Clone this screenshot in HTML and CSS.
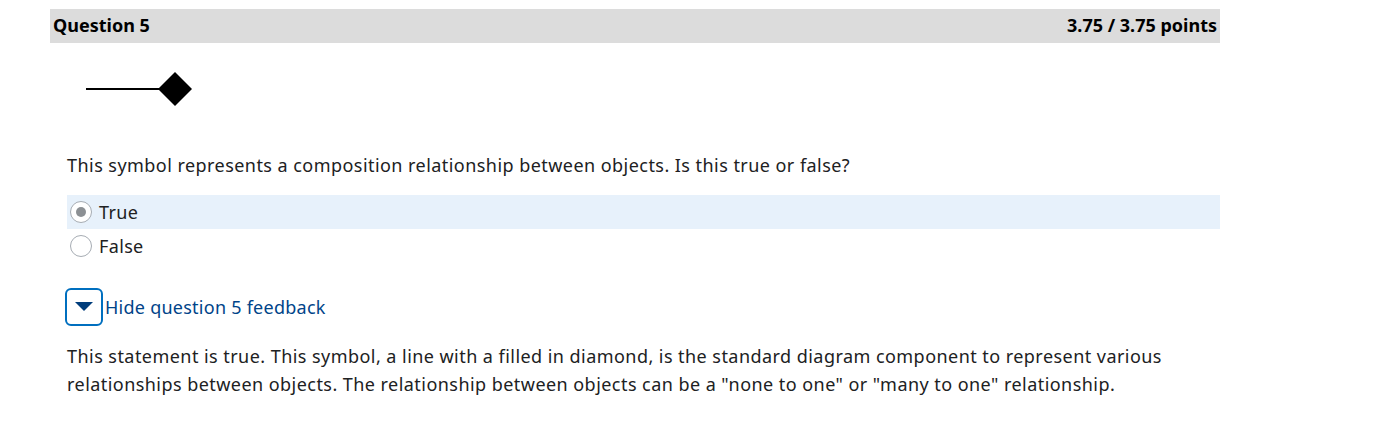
FILE: index.html
```html
<!DOCTYPE html>
<html>
<head>
<meta charset="utf-8">
<link rel="stylesheet" href="styles.css">
</head>
<body>
<div class="question">
  <div class="qhead">
    <span class="qtitle">Question 5</span>
    <span class="qpoints">3.75 / 3.75 points</span>
  </div>
  <div class="qbody">
    <div class="figure">
      <svg width="110" height="40" viewBox="0 0 110 40">
        <line x1="0" y1="20" x2="75" y2="20" stroke="#000" stroke-width="2"/>
        <polygon points="72,20 89,3 106,20 89,37" fill="#000"/>
      </svg>
    </div>
    <p class="prompt">This symbol represents a composition relationship between objects. Is this true or false?</p>
    <div class="options">
      <div class="option selected"><span class="radio checked"></span><span>True</span></div>
      <div class="option"><span class="radio"></span><span>False</span></div>
    </div>
    <div class="fb-toggle">
      <span class="fb-btn"><svg width="18" height="10" viewBox="0 0 18 10"><polygon points="0,0 18,0 9,9" fill="#003d7c"/></svg></span>
      <a class="fb-link">Hide question 5 feedback</a>
    </div>
    <p class="feedback">This statement is true. This symbol, a line with a filled in diamond, is the standard diagram component to represent various relationships between objects. The relationship between objects can be a "none to one" or "many to one" relationship.</p>
  </div>
</div>
</body>
</html>
```
FILE: styles.css
```css
html, body {
  margin: 0;
  padding: 0;
  background: #fff;
}
body {
  font-family: "Noto Sans", "Open Sans", sans-serif;
  color: #202122;
  padding: 9px 0 0 50px;
}
.question {
  width: 1170px;
}
.qhead {
  display: flex;
  justify-content: space-between;
  align-items: center;
  background: #dcdcdc;
  height: 34px;
  padding: 0 3px;
  font-weight: bold;
  font-size: 18px;
  line-height: 30px;
  color: #000;
  padding-bottom: 2px;
  box-sizing: border-box;
}
.qbody {
  padding-left: 17px;
}
.figure {
  padding: 26px 0 0 19px;
  height: 40px;
}
.figure svg {
  display: block;
}
.prompt {
  margin: 44px 0 0;
  font-size: 18px;
  line-height: 24px;
  letter-spacing: 0.45px;
}
.options {
  margin-top: 18px;
}
.option {
  display: flex;
  align-items: center;
  height: 34px;
  font-size: 18px;
  letter-spacing: 0.35px;
  gap: 7px;
  padding-left: 3px;
}
.option.selected {
  background: #e7f1fb;
}
.radio {
  width: 22px;
  height: 22px;
  border: 1px solid #a6acb3;
  border-radius: 50%;
  background: #fff;
  display: flex;
  align-items: center;
  justify-content: center;
  box-sizing: border-box;
}
.radio.checked::after {
  content: "";
  width: 10px;
  height: 10px;
  border-radius: 50%;
  background: #8c9094;
}
.fb-toggle {
  display: flex;
  align-items: center;
  margin-top: 25px;
}
.fb-btn {
  width: 38px;
  height: 38px;
  box-sizing: border-box;
  border: 2px solid #006fbf;
  border-radius: 6px;
  display: flex;
  align-items: center;
  justify-content: center;
  margin-left: -2px;
}
.fb-link {
  color: #004489;
  font-size: 18px;
  letter-spacing: 0.25px;
  margin-left: 2px;
}
.feedback {
  margin: 16px 0 0;
  font-size: 18px;
  line-height: 28px;
  letter-spacing: 0.45px;
  max-width: 1120px;
}
```
